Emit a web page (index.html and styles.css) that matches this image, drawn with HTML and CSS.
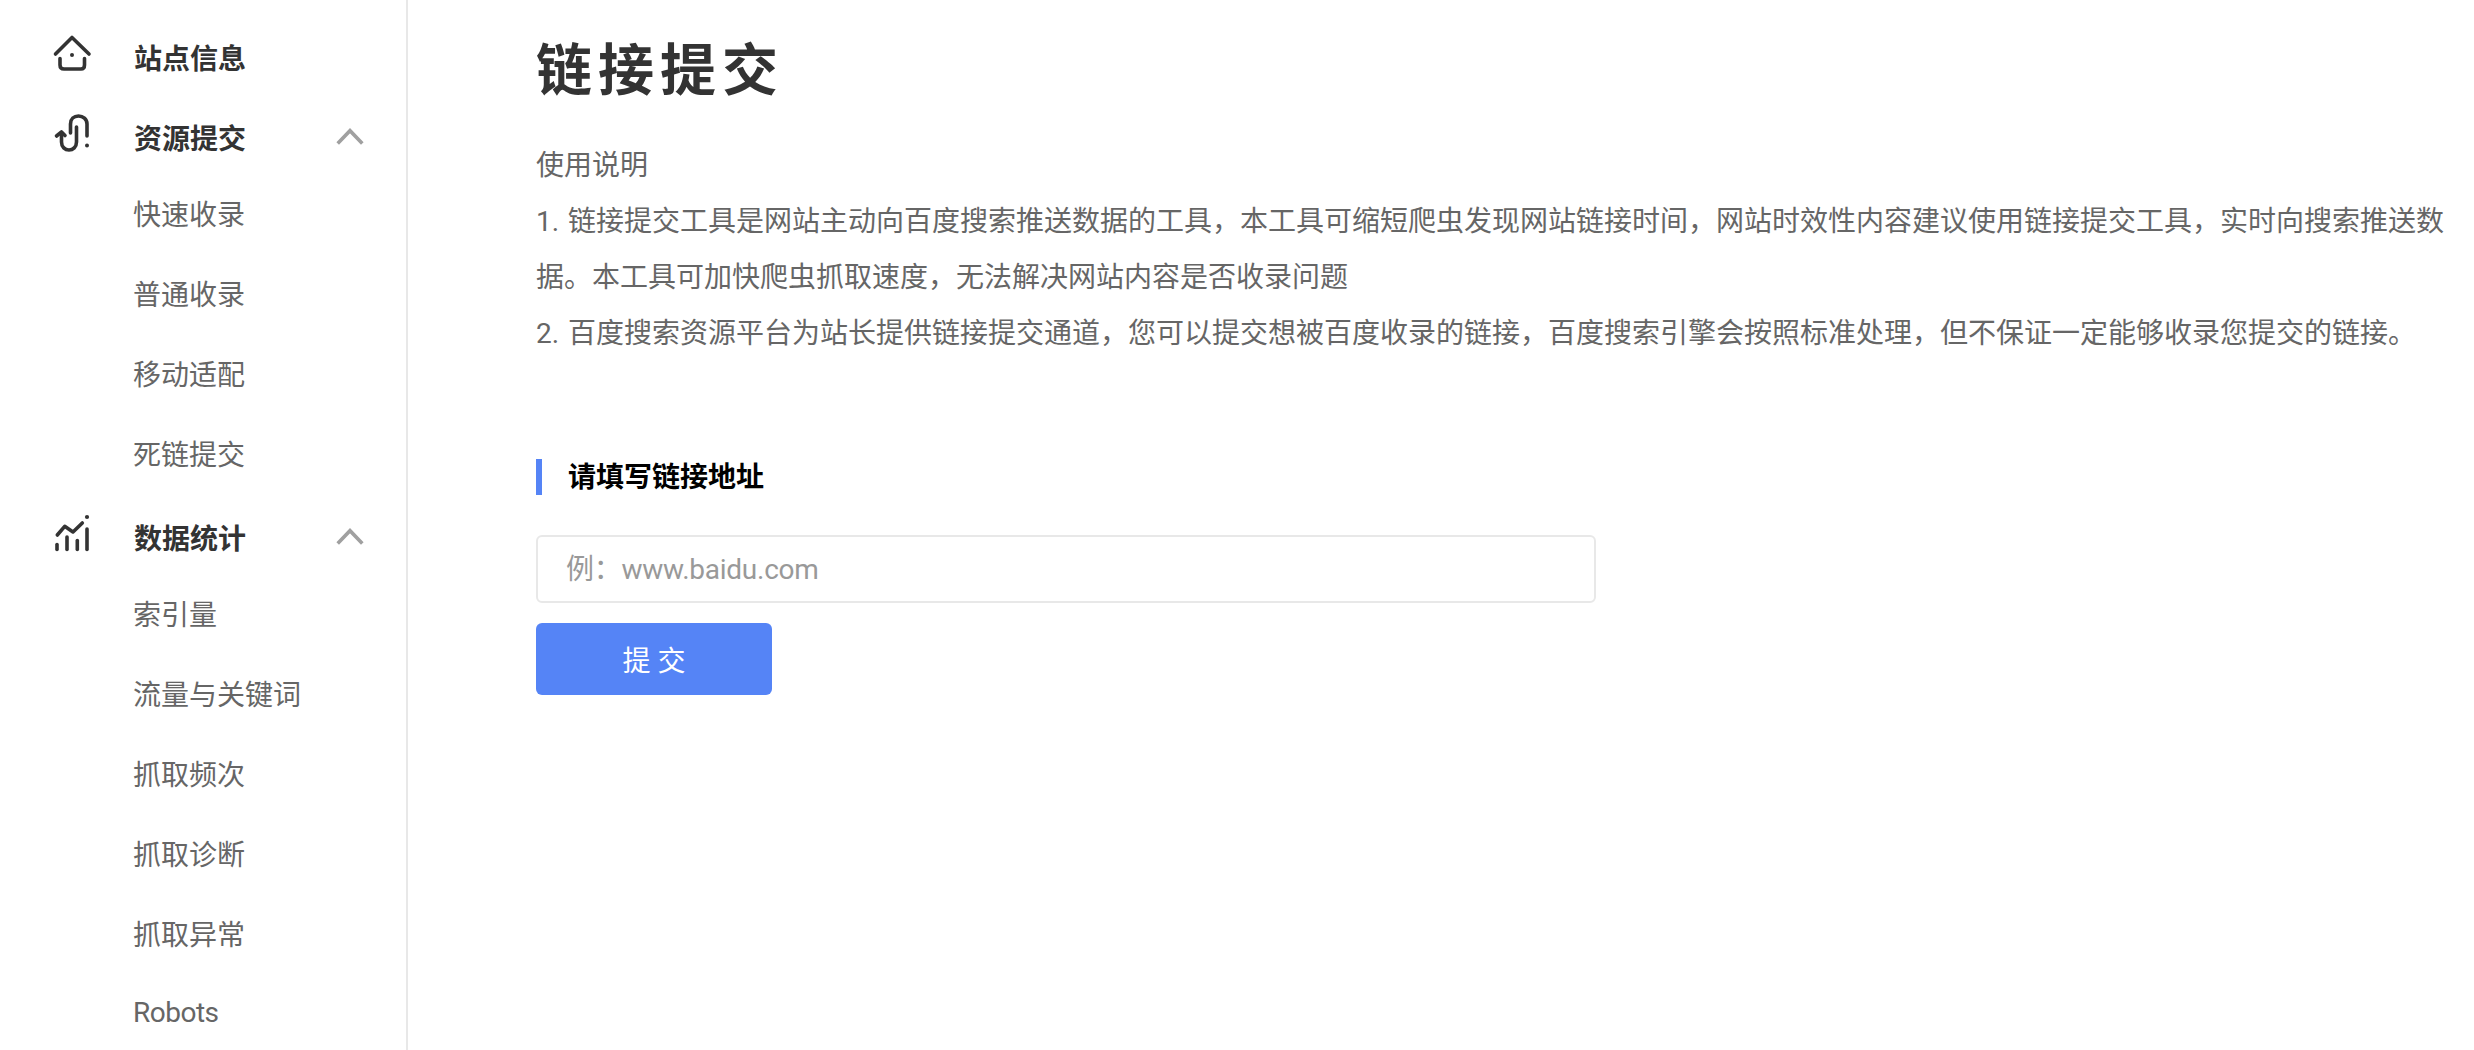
FILE: index.html
```html
<!DOCTYPE html>
<html lang="zh-CN">
<head>
<meta charset="utf-8">
<title>链接提交</title>
<link rel="stylesheet" href="styles.css">
</head>
<body>
<div class="layout">
  <aside class="sidebar">
    <div class="nav-head">
      <svg class="nav-icon" viewBox="0 -2 50 50" fill="none" stroke="#333" stroke-width="3.600" stroke-linecap="round" stroke-linejoin="round"><path d="M7.500 24 24 7.500 41 24"/><path d="M12 28.500V35Q12 39 16 39H33Q36.500 39 36.500 35V28.500"/><circle cx="24" cy="25" r="2" fill="#333" stroke="none"/></svg>
      <span>站点信息</span>
    </div>
    <div class="nav-head">
      <svg class="nav-icon" viewBox="0 0 50 50" fill="none" stroke="#333" stroke-width="3.600" stroke-linecap="round" stroke-linejoin="round"><path d="M8.500 28 13.500 24 17 27.500"/><path d="M13.500 25V34C13.500 39 17 42 21 42S28.500 39 28.500 34V19"/><path d="M22.500 25V16C22.500 11 26 8 30.500 8S39 11 39 16V28"/><circle cx="39" cy="37.500" r="2" fill="#333" stroke="none"/></svg>
      <span>资源提交</span>
      <svg class="chev" viewBox="0 0 30 18" fill="none" stroke="#a0a0a0" stroke-width="3.600"><path d="M2.700 15.500 15 2.700 27.300 15.500"/></svg>
    </div>
    <a class="nav-item first">快速收录</a>
    <a class="nav-item">普通收录</a>
    <a class="nav-item">移动适配</a>
    <a class="nav-item">死链提交</a>
    <div class="nav-head second">
      <svg class="nav-icon" viewBox="0 0 50 50" fill="none" stroke="#333" stroke-width="3.600" stroke-linecap="round" stroke-linejoin="round"><path d="M9.300 27 16.700 18.300 25 24 34.300 15"/><path d="M9 36.500V41.500"/><path d="M19 29V41.500"/><path d="M29.300 32.500V41.500"/><path d="M39 21V41.500"/><circle cx="39" cy="9" r="2.100" fill="#333" stroke="none"/></svg>
      <span>数据统计</span>
      <svg class="chev" viewBox="0 0 30 18" fill="none" stroke="#a0a0a0" stroke-width="3.600"><path d="M2.700 15.500 15 2.700 27.300 15.500"/></svg>
    </div>
    <a class="nav-item first">索引量</a>
    <a class="nav-item">流量与关键词</a>
    <a class="nav-item">抓取频次</a>
    <a class="nav-item">抓取诊断</a>
    <a class="nav-item">抓取异常</a>
    <a class="nav-item latin">Robots</a>
  </aside>
  <main class="main">
    <h1 class="title">链接提交</h1>
    <div class="desc">
      <p>使用说明</p>
      <p>1. 链接提交工具是网站主动向百度搜索推送数据的工具，本工具可缩短爬虫发现网站链接时间，网站时效性内容建议使用链接提交工具，实时向搜索推送数据。本工具可加快爬虫抓取速度，无法解决网站内容是否收录问题</p>
      <p>2. 百度搜索资源平台为站长提供链接提交通道，您可以提交想被百度收录的链接，百度搜索引擎会按照标准处理，但不保证一定能够收录您提交的链接。</p>
    </div>
    <h2 class="section">请填写链接地址</h2>
    <input class="url-input" type="text" placeholder="例：www.baidu.com">
    <button class="submit" type="button">提 交</button>
  </main>
</div>
</body>
</html>
```
FILE: styles.css
```css
* { box-sizing: border-box; }
html, body { margin: 0; height: 100%; overflow: hidden; background: #fff; }
body { font-family: Roboto, "Noto Sans CJK SC", sans-serif; color: #666; }
.layout { display: flex; height: 1050px; overflow: hidden; }
.sidebar { width: 408px; flex: none; border-right: 2px solid #e8e8e8; padding-top: 17px; }
.nav-head { display: flex; align-items: center; height: 80px; padding-left: 48px; font-size: 28px; font-weight: 700; color: #333; }
.nav-head.second { margin-top: 4px; }
.nav-icon { width: 50px; height: 50px; flex: none; margin-right: 36px; margin-bottom: 8px; }
.chev { width: 30px; height: 18px; margin-left: 89px; }
.nav-item { display: flex; align-items: center; height: 80px; padding-left: 133px; font-size: 28px; color: #666; }
.nav-item.first { margin-top: -4px; }
.nav-item.latin { letter-spacing: -0.5px; margin-top: -1px; }
.main { flex: 1; min-width: 0; padding: 31px 0 0 128px; }
.title { margin: 0; font-size: 56px; line-height: 80px; font-weight: 700; letter-spacing: 6px; color: #333; }
.desc { margin-top: 27px; width: 1920px; font-size: 28px; line-height: 56px; color: #666; word-spacing: 2px; }
.desc p { margin: 0; }
.section { margin: 97px 0 0; height: 36px; border-left: 6px solid #5584f6; padding-left: 26px; font-size: 28px; line-height: 38px; font-weight: 700; color: #000; }
.url-input { display: block; margin-top: 40px; width: 1060px; height: 68px; border: 2px solid #e8e8e8; border-radius: 6px; padding: 0 28px; font: inherit; font-size: 28px; color: #333; outline: none; }
.url-input::placeholder { color: #999; opacity: 1; letter-spacing: -0.25px; }
.submit { display: block; margin-top: 20px; width: 236px; height: 72px; border: 0; border-radius: 6px; background: #5584f6; color: #fff; font: inherit; font-size: 28px; }
```
